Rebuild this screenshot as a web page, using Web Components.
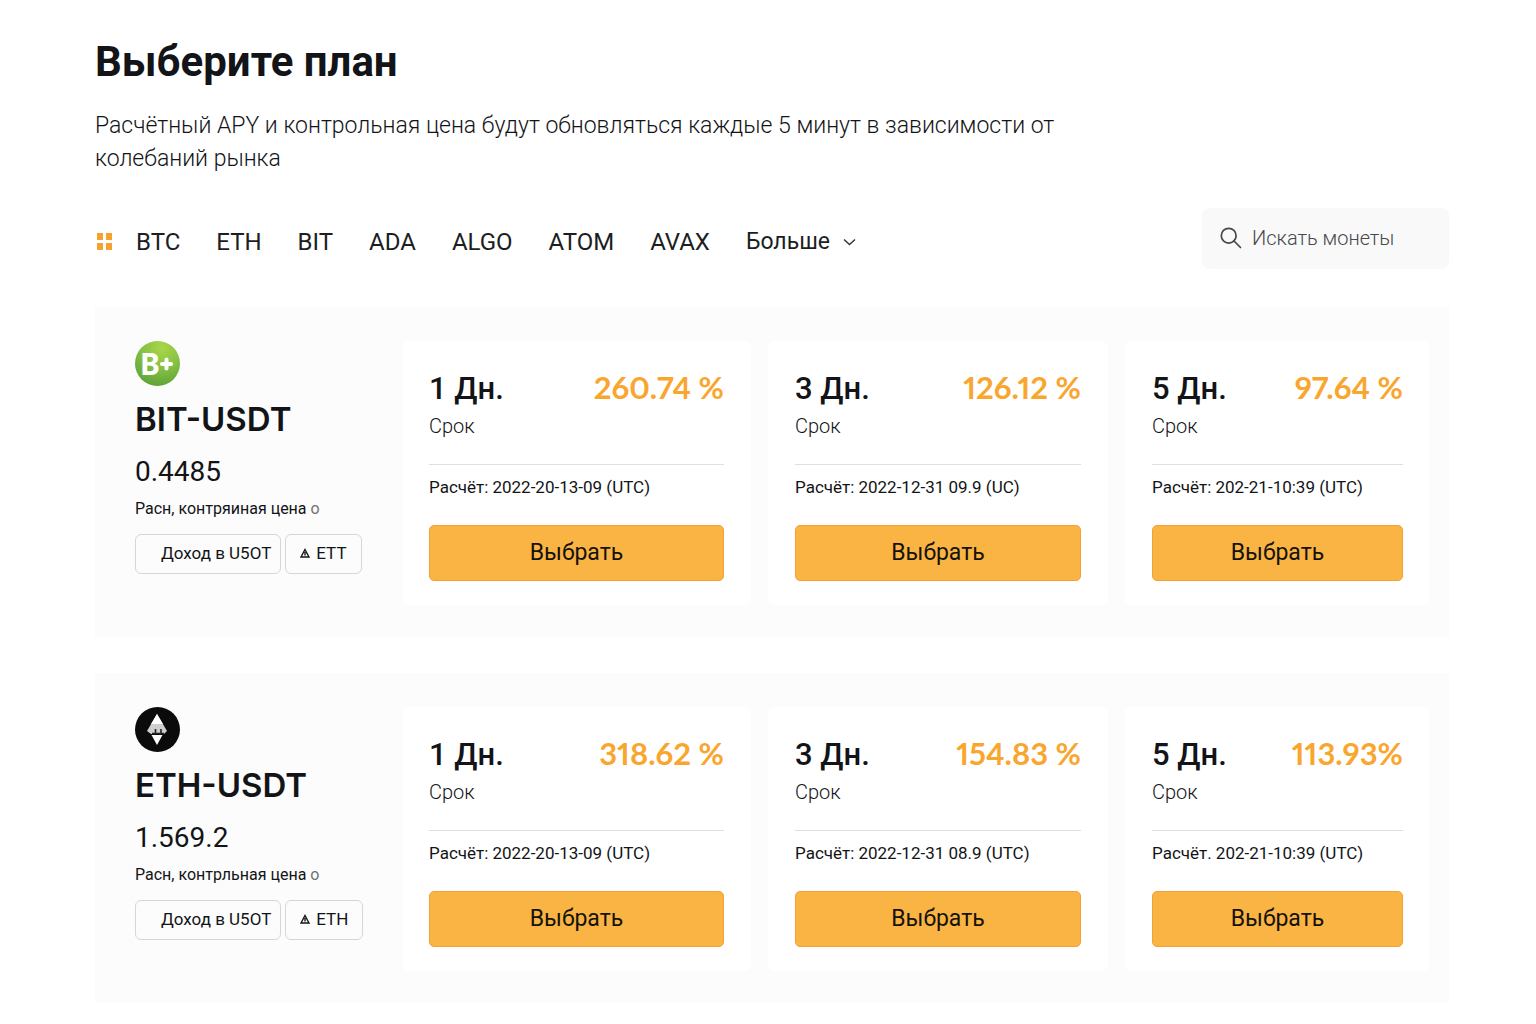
<!DOCTYPE html>
<html lang="ru">
<head>
<meta charset="utf-8">
<meta name="viewport" content="width=device-width, initial-scale=1">
<title>Выберите план</title>
<style>
	body {
		margin: 0;
		background: #fff;
		color: #121417;
		font-family: Roboto, "Noto Sans", sans-serif;
	}
</style>
</head>
<body>

<plan-page>
	<span slot="title">Выберите план</span>
	<span slot="text">Расчётный APY и контрольная цена будут обновляться каждые 5 минут в зависимости от колебаний рынка</span>

	<coin-nav slot="toolbar" coins="BTC,ETH,BIT,ADA,ALGO,ATOM,AVAX"></coin-nav>
	<coin-search slot="toolbar" label="Искать монеты"></coin-search>

	<plan-row pair="BIT-USDT" price="0.4485" note="Расн, контряиная цена" asset="ETT">
		<coin-logo slot="logo" coin="bit"></coin-logo>
		<plan-card term="1 Дн." apy="260.74 %" date="Расчёт: 2022-20-13-09 (UTC)"></plan-card>
		<plan-card term="3 Дн." apy="126.12 %" date="Расчёт: 2022-12-31 09.9 (UC)"></plan-card>
		<plan-card term="5 Дн." apy="97.64 %" date="Расчёт: 202-21-10:39 (UTC)"></plan-card>
	</plan-row>

	<plan-row pair="ETH-USDT" price="1.569.2" note="Расн, контрльная цена" asset="ETH">
		<coin-logo slot="logo" coin="eth"></coin-logo>
		<plan-card term="1 Дн." apy="318.62 %" date="Расчёт: 2022-20-13-09 (UTC)"></plan-card>
		<plan-card term="3 Дн." apy="154.83 %" date="Расчёт: 2022-12-31 08.9 (UTC)"></plan-card>
		<plan-card term="5 Дн." apy="113.93%" date="Расчёт. 202-21-10:39 (UTC)"></plan-card>
	</plan-row>
</plan-page>

<script>
class PlanPage extends HTMLElement{
	connectedCallback(){
		this.attachShadow({mode: 'open'});
		this.shadowRoot.innerHTML = `
		<style>
			:host{
				display: block;
				padding: 37px 87px 20px 95px;
			}
			h1{
				margin: 0;
				font-size: 42px;
				line-height: 50px;
				font-weight: 700;
			}
			p{
				margin: 22px 0 0;
				max-width: 980px;
				font-size: 23px;
				line-height: 33px;
				font-weight: 300;
			}
			.toolbar{
				display: flex;
				justify-content: space-between;
				align-items: center;
				margin: 33px 0 38px;
			}
			.rows{
				display: grid;
				gap: 36px;
			}
		</style>
		<h1><slot name="title"></slot></h1>
		<p><slot name="text"></slot></p>
		<div class="toolbar"><slot name="toolbar"></slot></div>
		<main class="rows"><slot></slot></main>
		`;
	}
}

class CoinNav extends HTMLElement{
	connectedCallback(){
		this.attachShadow({mode: 'open'});
		var links = this.getAttribute("coins").split(",").map(function(coin){
			return `<a href="#${coin}">${coin}</a>`;
		}).join("");

		this.shadowRoot.innerHTML = `
		<style>
			:host{
				display: block;
				padding-top: 6px;
			}
			nav{
				display: flex;
				align-items: center;
				gap: 36px;
				font-size: 24px;
				line-height: 32px;
			}
			a{
				color: #1c1e22;
				text-decoration: none;
			}
			.all{
				display: flex;
				padding: 0 2px;
				margin-right: -14px;
			}
			button{
				display: flex;
				align-items: center;
				gap: 13px;
				padding: 0;
				border: 0;
				background: none;
				color: #1c1e22;
				font: inherit;
				font-size: 23px;
				cursor: pointer;
			}
		</style>
		<nav>
			<a class="all" href="#all" aria-label="Все монеты">
				<svg width="15" height="17" viewBox="0 0 15 17" fill="#f7a12d">
					<path d="M0 0h6v7H0zM9 0h6v7H9zM0 10h6v7H0zM9 10h6v7H9z"/>
				</svg>
			</a>
			${links}
			<button type="button">Больше
				<svg width="13" height="8" viewBox="0 0 13 8" fill="none" stroke="#33363b" stroke-width="1.5">
					<path d="M1 1.5l5.5 5 5.5-5"/>
				</svg>
			</button>
		</nav>
		`;
	}
}

class CoinSearch extends HTMLElement{
	connectedCallback(){
		this.attachShadow({mode: 'open'});
		var label = this.getAttribute("label");
		this.shadowRoot.innerHTML = `
		<style>
			:host{
				display: block;
				width: 247px;
			}
			label{
				display: flex;
				align-items: center;
				gap: 10px;
				height: 61px;
				padding: 0 18px 2px;
				box-sizing: border-box;
				border-radius: 8px;
				background: #f9f9f9;
			}
			svg{ flex: none; }
			input{
				flex: 1;
				min-width: 0;
				padding: 0;
				border: 0;
				outline: 0;
				background: none;
				color: #45484d;
				font: 300 20px/28px Roboto, "Noto Sans", sans-serif;
			}
			input::placeholder{
				color: #45484d;
				opacity: 1;
			}
		</style>
		<label>
			<svg width="22" height="22" viewBox="0 0 22 22" fill="none" stroke="#45484d" stroke-width="1.7" stroke-linecap="round">
				<circle cx="8.7" cy="8.7" r="7.4"/>
				<path d="M14 14l6.5 6.5"/>
			</svg>
			<input type="search" aria-label="${label}" placeholder="${label}">
		</label>
		`;
	}
}

class CoinLogo extends HTMLElement{
	connectedCallback(){
		this.attachShadow({mode: 'open'});
		var pictures = {
			bit: `
				<defs>
					<radialGradient id="green" cx="0.6" cy="0.15" r="0.9">
						<stop offset="0" stop-color="#a9d648"/>
						<stop offset="0.5" stop-color="#86c143"/>
						<stop offset="1" stop-color="#5da039"/>
					</radialGradient>
				</defs>
				<circle cx="22.5" cy="22.5" r="22.5" fill="url(#green)"/>
				<text x="5" y="34" fill="#fff" font-family="Noto Sans, Open Sans, sans-serif" font-size="30" font-weight="700">B</text>
				<path d="M31.5 18.5v9M27 23h9" stroke="#fff" stroke-width="4" stroke-linecap="round"/>`,
			eth: `
				<circle cx="22.5" cy="22.5" r="22.5" fill="#0b0b0b"/>
				<path d="M22 7l10 17-3 3H16l-4-3z" fill="#cfcfcf"/>
				<path d="M22 7l6 10H16z" fill="#fff"/>
				<path d="M20.500 22v4M26 22v4M17 26.500h12" stroke="#222" stroke-width="1.600"/>
				<path d="M16.500 28h11L22 38z" fill="#fff"/>`
		};
		this.shadowRoot.innerHTML = `
		<style>
			:host{ display: block; }
			svg{ display: block; }
		</style>
		<svg width="45" height="45" viewBox="0 0 45 45" aria-hidden="true">${pictures[this.getAttribute("coin")]}</svg>
		`;
	}
}

class PlanRow extends HTMLElement{
	connectedCallback(){
		this.attachShadow({mode: 'open'});
		this.shadowRoot.innerHTML = `
		<style>
			:host{
				display: grid;
				grid-template-columns: 250px minmax(0, 1fr);
				gap: 17px;
				padding: 34px 19px 32px 40px;
				background: #fcfcfc;
			}
			h2{
				margin: 13px 0 0;
				font: 600 33px/40px Inter, Roboto, sans-serif;
			}
			.price{
				margin-top: 15px;
				font-size: 28px;
				line-height: 36px;
			}
			.note{
				margin-top: 7px;
				font-size: 16px;
				line-height: 24px;
			}
			.note span{ color: #6f7277; }
			.chips{
				display: flex;
				gap: 4px;
				margin-top: 13px;
			}
			.chip{
				display: flex;
				align-items: center;
				gap: 6px;
				height: 40px;
				padding: 0 9px 2px 25px;
				box-sizing: border-box;
				border: 1px solid #d3d7db;
				border-radius: 6px;
				font-size: 17px;
				white-space: nowrap;
			}
			.asset{ padding: 0 14px 2px; }
			.cards{
				display: grid;
				grid-template-columns: 349fr 340fr 305fr;
				gap: 17px;
			}
		</style>
		<div>
			<slot name="logo"></slot>
			<h2>${this.getAttribute("pair")}</h2>
			<div class="price">${this.getAttribute("price")}</div>
			<div class="note">${this.getAttribute("note")} <span>o</span></div>
			<div class="chips">
				<div class="chip">Доход в U5OT</div>
				<div class="chip asset">
					<svg width="10" height="10" viewBox="0 0 10 10" fill="none" stroke="#121417" stroke-width="1.4">
						<path d="M5 1.500L9 9H1zM5 4v3.500"/>
					</svg>
					${this.getAttribute("asset")}
				</div>
			</div>
		</div>
		<div class="cards"><slot></slot></div>
		`;
	}
}

class PlanCard extends HTMLElement{
	connectedCallback(){
		this.attachShadow({mode: 'open'});
		this.shadowRoot.innerHTML = `
		<style>
			:host{
				display: block;
				padding: 26px 27px 24px;
				border-radius: 6px;
				background: #fff;
			}
			.head{
				display: flex;
				justify-content: space-between;
				align-items: baseline;
				line-height: 40px;
				white-space: nowrap;
			}
			.term{
				font-size: 31px;
				font-weight: 500;
			}
			.apy{
				color: #f9a62f;
				font-family: Lato, Roboto, sans-serif;
				font-size: 31px;
				font-weight: 700;
				font-variant-numeric: proportional-nums;
			}
			.label{
				margin-top: 3px;
				font-size: 20px;
				line-height: 28px;
				font-weight: 300;
			}
			hr{
				height: 1px;
				margin: 24px 0 0;
				border: 0;
				background: #dedfe1;
			}
			.date{
				margin-top: 10px;
				font-size: 17px;
				line-height: 24px;
				white-space: nowrap;
			}
			button{
				display: block;
				width: 100%;
				height: 56px;
				margin-top: 26px;
				border: 1px solid #f2a135;
				border-radius: 5px;
				background: #fab444;
				color: #15120c;
				font: 400 23px/28px Roboto, "Noto Sans", sans-serif;
				cursor: pointer;
			}
		</style>
		<div class="head">
			<span class="term">${this.getAttribute("term")}</span>
			<span class="apy">${this.getAttribute("apy")}</span>
		</div>
		<div class="label">Срок</div>
		<hr>
		<div class="date">${this.getAttribute("date")}</div>
		<button type="button">Выбрать</button>
		`;
	}
}

window.customElements.define("plan-page", PlanPage);
window.customElements.define("coin-nav", CoinNav);
window.customElements.define("coin-search", CoinSearch);
window.customElements.define("coin-logo", CoinLogo);
window.customElements.define("plan-row", PlanRow);
window.customElements.define("plan-card", PlanCard);
</script>
</body>
</html>
